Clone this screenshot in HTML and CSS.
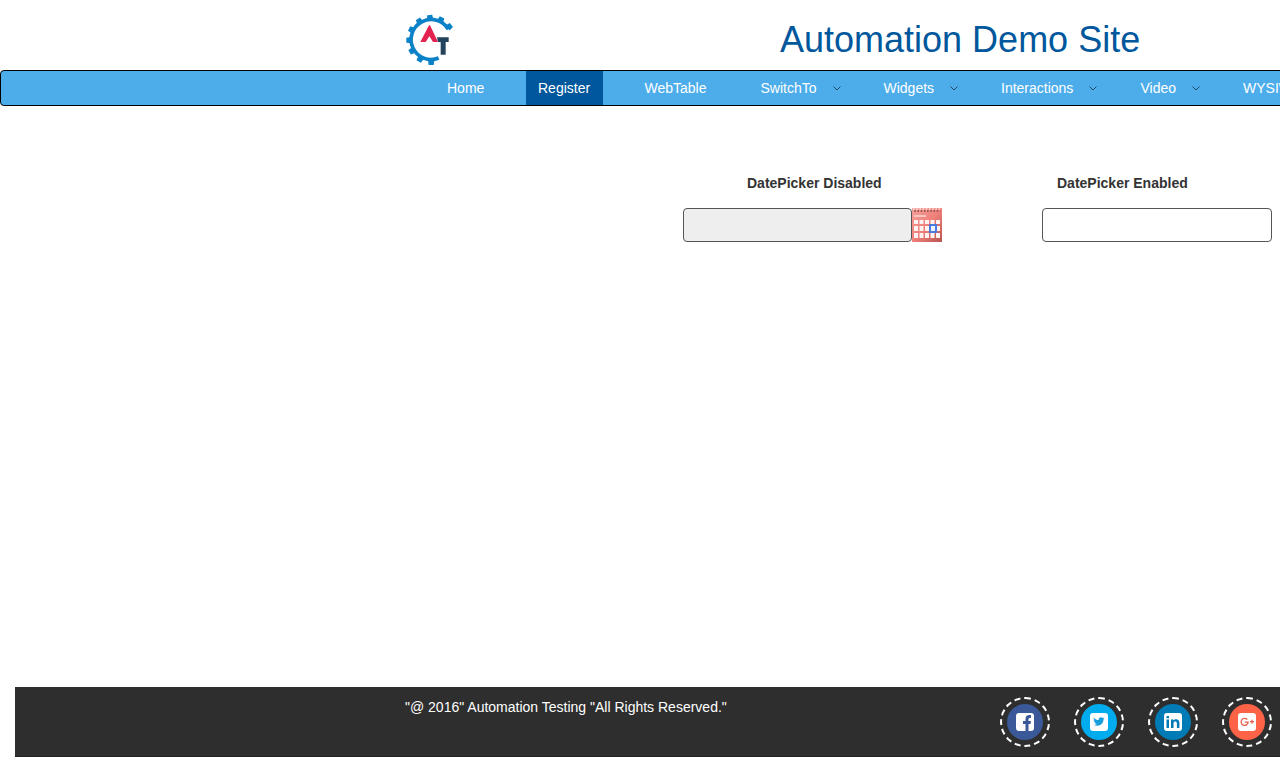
FILE: index.html
```html
<!DOCTYPE html>
<html lang="en">
<head>
<meta charset="utf-8">
<title>Datepicker</title>
<link rel="stylesheet" href="styles.css">
</head>
<body>
<div class="page">
  <header class="header">
    <svg class="logo" viewBox="0 0 210 195">
      <path class="gear" d="M160 73A60 60 0 1 0 131 159"/>
      <g class="teeth">
        <path id="tooth" d="M102 30h15l2 14h-19z" transform="rotate(-4 109 105)"/>
        <use href="#tooth" transform="rotate(29 109 105)"/>
        <use href="#tooth" transform="rotate(57 109 105)"/>
        <use href="#tooth" transform="rotate(-29 109 105)"/>
        <use href="#tooth" transform="rotate(-59 109 105)"/>
        <use href="#tooth" transform="rotate(-87 109 105)"/>
        <use href="#tooth" transform="rotate(-116 109 105)"/>
        <use href="#tooth" transform="rotate(-146 109 105)"/>
        <use href="#tooth" transform="rotate(-176 109 105)"/>
      </g>
      <path fill="#e2234f" d="M102 61h3l24 50h-15l-11-17-11 17H76z"/>
      <path fill="#22435b" d="M126 97h35v14h-9v38h-15v-38h-8z"/>
    </svg>
    <h1 class="title">Automation Demo Site</h1>
  </header>
  <nav class="nav">
    <a class="item home">Home</a>
    <a class="item active">Register</a>
    <a class="item webtable">WebTable</a>
    <a class="item switchto">SwitchTo<svg class="chev" viewBox="0 0 8 5"><path d="M.5.5 4 4 7.5.5"/></svg></a>
    <a class="item widgets">Widgets<svg class="chev" viewBox="0 0 8 5"><path d="M.5.5 4 4 7.5.5"/></svg></a>
    <a class="item interactions">Interactions<svg class="chev" viewBox="0 0 8 5"><path d="M.5.5 4 4 7.5.5"/></svg></a>
    <a class="item video">Video<svg class="chev" viewBox="0 0 8 5"><path d="M.5.5 4 4 7.5.5"/></svg></a>
    <a class="item wysiwyg">WYSIWYG</a>
  </nav>
  <main class="main">
    <div class="field disabled">
      <label class="label" for="d1">DatePicker Disabled</label>
      <div class="row">
        <input class="input" id="d1" disabled>
        <svg class="calendar" viewBox="0 0 30 34">
          <defs><linearGradient id="red" x1="0" y1="0" x2="1" y2="1"><stop offset="0" stop-color="#f4a09a"/><stop offset=".5" stop-color="#f0807a"/><stop offset="1" stop-color="#b85450"/></linearGradient></defs>
          <path fill="url(#red)" d="M0 0h30v34H0z"/>
          <path stroke="#fff" stroke-opacity=".6" stroke-width="2" stroke-dasharray="1.500 1.700" d="M1 1h28"/>
          <path stroke="#9c5652" stroke-width="2" stroke-dasharray="1.500 1.700" d="M2.300 3h26"/>
          <path stroke="#f9c5c0" stroke-width="2" d="M2 8h12"/>
          <path fill="#fff3f1" d="M2 12h4v4H2zm5.500 0h4v4h-4zm5.500 0h4v4h-4zm5.500 0h4v4h-4zm5.500 0h4v4h-4zM2 18h4v5H2zm5.500 0h4v5h-4zm5.500 0h4v5h-4zm5.500 0h4v5h-4zm5.500 0h4v5h-4zM2 25h4v5H2zm5.500 0h4v5h-4zm5.500 0h4v5h-4zm5.500 0h4v5h-4zm5.500 0h4v5h-4z"/>
          <path fill="#edf3ff" stroke="#477be0" stroke-width="2" d="M18 17h6v7h-6z"/>
        </svg>
      </div>
    </div>
    <div class="field enabled">
      <label class="label" for="d2">DatePicker Enabled</label>
      <div class="row"><input class="input wide" id="d2"></div>
    </div>
  </main>
  <footer class="footer">
    <p class="copy">"@ 2016" Automation Testing "All Rights Reserved."</p>
    <div class="social">
      <a class="badge"><svg viewBox="2 2 46 46"><circle cx="25" cy="25" r="18" fill="#3b5998"/><rect x="16" y="16" width="18" height="18" rx="3" fill="#fff"/><path fill="#3b5998" d="M25.500 34v-7H23v-3h2.500v-2c0-2.500 1.500-4 4-4H31v3h-1c-1 0-1.500.5-1.500 1.500V24H31l-.5 3h-2v7z"/></svg></a>
      <a class="badge"><svg viewBox="2 2 46 46"><circle cx="25" cy="25" r="18" fill="#00aced"/><rect x="16" y="16" width="18" height="18" rx="3" fill="#fff"/><path fill="#179fdc" d="M19.800 20.700c1.300 1.500 3 2.300 4.900 2.400-.4-2.500 2.300-3.800 4-2.100l1.500-.6-.9 1.400 1.200-.3-1.100 1.300c.1 4.400-4.800 7.700-9.800 5 1.200.1 2.300-.2 3.200-.9-1.100-.1-1.800-.6-2.200-1.600h1c-1.200-.5-1.800-1.300-1.800-2.400l1 .3c-1.100-.7-1.500-1.500-1-2.500z"/></svg></a>
      <a class="badge"><svg viewBox="2 2 46 46"><circle cx="25" cy="25" r="18" fill="#007bb6"/><rect x="16" y="16" width="18" height="18" rx="3" fill="#fff"/><path fill="#007bb6" d="M18.500 22.500H21V31h-2.500zM18.500 19H21v2.200h-2.500zM23 22.500h2.400v1.100c1.800-2.200 6-1.600 6 2.100V31h-2.500v-4.600c0-2.500-3.400-2.300-3.400 0V31H23z"/></svg></a>
      <a class="badge"><svg viewBox="2 2 46 46"><circle cx="25" cy="25" r="18" fill="#ff6347"/><rect x="16" y="16" width="18" height="18" rx="3" fill="#fff"/><path fill="none" stroke="#e8604a" stroke-width="1.300" d="M25.300 22.700a3.500 3.500 0 1 0 .8 2.500h-3.400M28 24.700h4M30 22.700v4"/></svg></a>
    </div>
  </footer>
</div>
</body>
</html>
```
FILE: styles.css
```css
* { box-sizing: border-box; }
html, body { margin: 0; overflow: hidden; }
body { font: 14px/20px "Liberation Sans", Arial, sans-serif; color: #333; background: #fff; }
.page { display: flex; flex-direction: column; width: 1280px; height: 757px; overflow: hidden; }
.header { display: flex; height: 70px; padding: 5px 0 0 395px; }
.logo { flex: none; width: 70px; height: 65px; }
.gear { fill: none; stroke: #0b82c8; stroke-width: 11; }
.teeth { fill: #0b82c8; }
.title { margin: 15px 0 0 315px; font-size: 36px; line-height: 40px; font-weight: 400; color: #00579c; white-space: nowrap; }
.nav { display: flex; width: 1400px; height: 36px; border: 1px solid #000; border-radius: 4px; background: #4dadeb; padding-left: 434px; }
.item { display: flex; flex: none; align-items: center; height: 34px; padding: 0 12px; color: #fff; }
.home { width: 91px; }
.active { width: 77px; background: #00579c; }
.webtable { width: 116px; margin-left: 29.5px; }
.switchto { width: 123px; }
.widgets { width: 117.5px; }
.interactions { width: 139.5px; }
.video { width: 102.5px; }
.chev { width: 8px; height: 5px; margin-left: 16px; fill: none; stroke: #234a66; stroke-width: 1; }
.main { display: flex; flex: 1; padding: 67px 8px 0 683px; }
.field { display: flex; flex-direction: column; }
.disabled { width: 359px; }
.label { font-size: 14px; line-height: 20px; font-weight: 700; margin-bottom: 15px; padding-left: 64px; }
.enabled .label { padding-left: 15px; }
.row { display: flex; }
.input { width: 229px; height: 34px; margin: 0; border: 1px solid #555; border-radius: 4px; background: #fff; }
.input:disabled { background: #eee; }
.wide { width: 230px; }
.calendar { width: 30px; height: 34px; }
.footer { display: flex; justify-content: space-between; height: 70px; margin-left: 15px; padding: 10px 8px 0 390px; background: #2e2e2e; border-bottom: 1px solid #241f20; }
.copy { margin: 0; color: #fff; }
.social { display: flex; gap: 24px; }
.badge { display: block; width: 50px; height: 50px; border: 2px dashed #fff; border-radius: 50%; }
.badge svg { display: block; width: 46px; height: 46px; }
```
